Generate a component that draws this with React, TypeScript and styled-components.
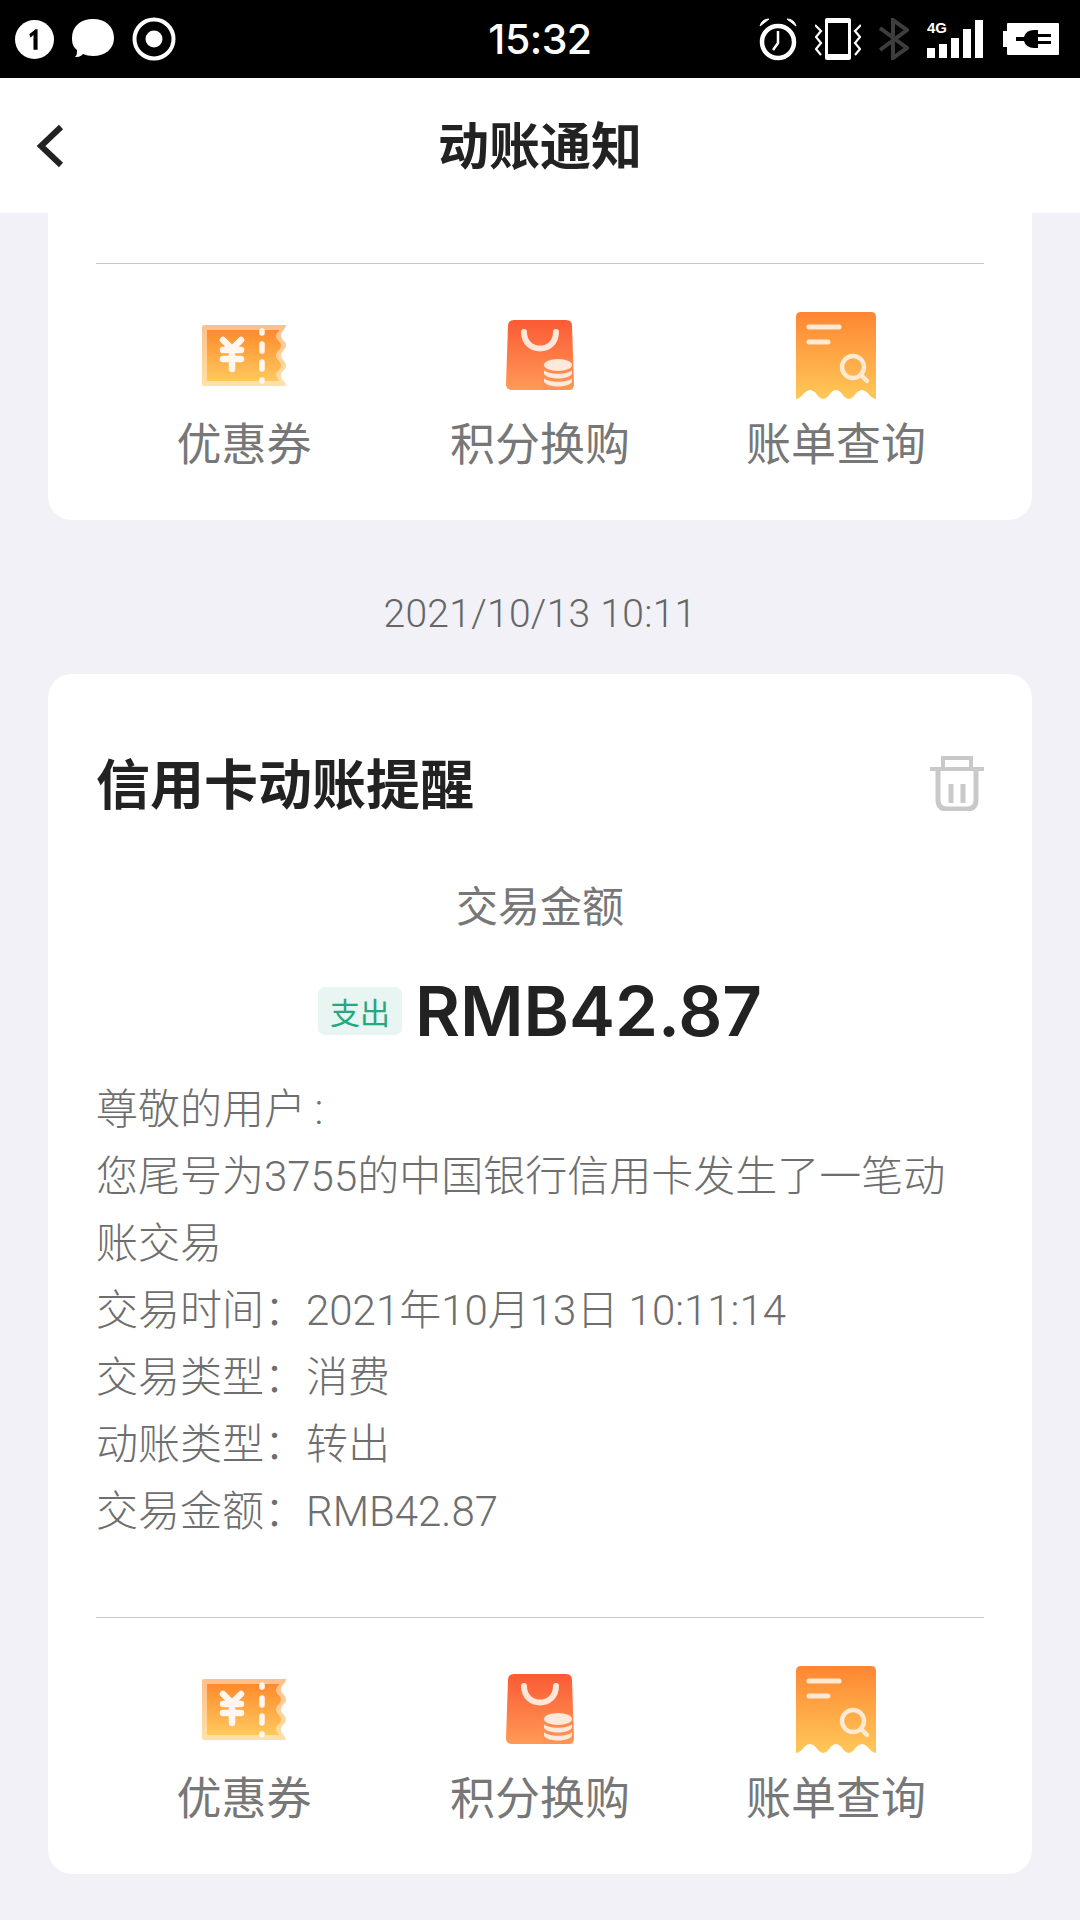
import React from 'react';
import styled, {createGlobalStyle} from 'styled-components';

const FONT = '"Liberation Sans", "Noto Sans CJK SC", sans-serif';
const THIN = 'Roboto, "Noto Sans CJK SC", sans-serif';

const GlobalStyle = createGlobalStyle`
  html, body {
    margin: 0;
    padding: 0;
    background: #f1f1f7;
  }
  * {
    box-sizing: border-box;
  }
`;

const Page = styled.div`
  width: 1080px;
  height: 1920px;
  overflow: hidden;
  display: flex;
  flex-direction: column;
  background: #f1f1f7;
  font-family: ${FONT};
`;

const StatusBar = styled.div`
  height: 78px;
  background: #000;
  display: grid;
  grid-template-columns: 1fr auto 1fr;
  align-items: center;
  padding: 0 20px 0 15px;
  color: #fff;
`;

const StatusLeft = styled.div`
  display: flex;
  align-items: center;
  gap: 17px;
`;

const StatusRight = styled.div`
  display: flex;
  align-items: center;
  justify-content: flex-end;
  gap: 18px;
`;

const Clock = styled.div`
  padding-left: 5px;
  font-family: Inter, sans-serif;
  font-size: 41px;
  font-weight: 500;
  letter-spacing: -0.5px;
  line-height: 78px;
`;

const NavBar = styled.div`
  position: relative;
  height: 135px;
  background: #fff;
  display: flex;
  align-items: center;
  justify-content: center;
`;

const BackIcon = styled.svg`
  position: absolute;
  left: 35px;
  top: 46px;
`;

const NavTitle = styled.div`
  padding-bottom: 5px;
  font-size: 51px;
  font-weight: 700;
  color: #222;
`;

const Card = styled.div<{$clipped?: boolean}>`
  margin: 0 48px;
  padding: ${p => (p.$clipped ? '50px' : '79px')} 48px 44px 48px;
  background: #fff;
  border-radius: ${p => (p.$clipped ? '0 0 24px 24px' : '24px')};
`;

const DateLine = styled.div`
  padding: 64px 0 30px;
  line-height: 60px;
  text-align: center;
  font-family: ${THIN};
  font-weight: 300;
  font-size: 39px;
  letter-spacing: 0.3px;
  color: #666;
`;

const Divider = styled.div`
  height: 1px;
  background: #c9c9c9;
`;

const ActionRow = styled.div`
  display: grid;
  grid-template-columns: repeat(3, 1fr);
  padding-top: 46px;
`;

const Action = styled.div`
  display: flex;
  flex-direction: column;
  align-items: center;
`;

const ActionIcon = styled.div`
  height: 90px;
  display: flex;
  align-items: center;
  justify-content: center;
`;

const ActionLabel = styled.div`
  margin-top: 16px;
  line-height: 60px;
  font-size: 45px;
  color: #777;
`;

const TitleRow = styled.div`
  display: flex;
  align-items: center;
  justify-content: space-between;
  height: 60px;
`;

const CardTitle = styled.div`
  padding-top: 5px;
  font-size: 54px;
  font-weight: 700;
  color: #222;
  line-height: 60px;
`;

const AmountLabel = styled.div`
  margin-top: 65px;
  text-align: center;
  line-height: 60px;
  font-size: 42px;
  color: #777;
`;

const AmountRow = styled.div`
  margin-top: 33px;
  height: 80px;
  display: flex;
  align-items: center;
  justify-content: center;
  gap: 13px;
`;

const Badge = styled.div`
  width: 84px;
  height: 48px;
  border-radius: 7px;
  background: #e8f5f2;
  color: #27a67f;
  font-size: 30px;
  display: flex;
  align-items: center;
  justify-content: center;
`;

const Amount = styled.div`
  font-family: Inter, sans-serif;
  font-size: 69px;
  font-weight: 600;
  color: #222;
  line-height: 80px;
`;

const Body = styled.div`
  margin-top: 25px;
  margin-bottom: 72px;
  font-family: ${THIN};
  font-weight: 300;
  font-size: 42px;
  line-height: 67px;
  color: #6e6e6e;
`;

const Gradient = ({id, from, to}: {id: string; from: string; to: string}) => (
  <linearGradient id={id} x1="0" y1="0" x2="0" y2="1">
    <stop offset="0" stopColor={from} />
    <stop offset="1" stopColor={to} />
  </linearGradient>
);

const TicketIcon = () => (
  <svg width="84" height="61" viewBox="0 0 84 61">
    <defs>
      <Gradient id="ticket" from="#ff8a2c" to="#ffc95e" />
    </defs>
    <path
      d="M2 0H84C84 4 79 6 79 10.500C79 15 84 16 84 20.500C84 25 79 26 79 30.500C79 35 84 36 84 40.500C84 45 79 46 79 50.500C79 55 84 57 84 61H2Q0 61 0 59V2Q0 0 2 0Z"
      fill="url(#ticket)"
      opacity="0.55"
    />
    <path
      d="M5 5H77C77 7 74 8 74 11C74 16 79 16 79 20.500C79 25 74 26 74 30.500C74 35 79 36 79 40.500C79 45 74 46 74 50C74 53 77 54 77 56H5Z"
      fill="url(#ticket)"
    />
    <g stroke="#fff7ef" strokeLinecap="round" fill="none">
      <path d="M21 15L30 24L39 15M30 24V44M21 25H39M21 34H39" strokeWidth="6.500" />
      <path d="M60 6V8M60 19V26M60 37V44M60 55V56" strokeWidth="5.500" />
    </g>
  </svg>
);

const BagIcon = () => (
  <svg width="68" height="70" viewBox="0 0 68 70">
    <defs>
      <Gradient id="bag" from="#fb5a34" to="#ff9a56" />
    </defs>
    <path d="M8 0H60Q66 0 66 6L68 64Q68 70 62 70H6Q0 70 0 64L2 6Q2 0 8 0Z" fill="url(#bag)" />
    <path d="M18 12C18 34 50 34 50 12" fill="none" stroke="#ffe6d8" strokeWidth="6" strokeLinecap="round" />
    <path d="M36 39H67V70H36Z" fill="#ff8a52" opacity="0.35" />
    <ellipse cx="52" cy="45" rx="14" ry="6" fill="#ffe9da" />
    <path d="M38 50C42 55 62 55 66 50V54C62 60 42 60 38 54Z" fill="#ffe9da" />
    <path d="M38 58C42 63 62 63 66 58V62C62 68 42 68 38 62Z" fill="#ffe9da" />
  </svg>
);

const ReceiptIcon = () => (
  <svg width="80" height="87" viewBox="0 0 80 87">
    <defs>
      <Gradient id="receipt" from="#ff8632" to="#ffc858" />
    </defs>
    <path
      d="M5 0H75Q80 0 80 5V87C74 87 72 78 66 78C60 78 58 87 53 87C47 87 46 78 40 78C34 78 33 87 27 87C22 87 20 78 14 78C8 78 6 87 0 87V5Q0 0 5 0Z"
      fill="url(#receipt)"
    />
    <g stroke="#ffe9d2" fill="none" strokeLinecap="round">
      <path d="M13 15H43" strokeWidth="5" />
      <path d="M13 30H32" strokeWidth="5" />
      <circle cx="57" cy="55" r="11" strokeWidth="4.500" />
      <path d="M65 63L71 69" strokeWidth="4.500" />
    </g>
  </svg>
);

const TrashIcon = () => (
  <svg width="54" height="55" viewBox="0 0 54 55" fill="none" stroke="#c9c9c9" strokeWidth="4">
    <path d="M0 13H54M13 13V2H41V13" />
    <path d="M8 13V44Q8 53 17 53H37Q46 53 46 44V13" strokeWidth="5" />
    <path d="M21 28V47M33 28V47" strokeWidth="5" />
  </svg>
);

const NoticeBadge = () => (
  <svg width="39" height="39" viewBox="0 0 38 38">
    <circle cx="19" cy="19" r="19" fill="#fff" />
    <path d="M14 14L20 9H22V29H18V14.500L15 17Z" fill="#000" />
  </svg>
);

const BubbleIcon = () => (
  <svg width="44" height="42" viewBox="0 0 44 42">
    <path
      d="M22 1C34 1 43 8 43 20C43 31 34 38 22 38C18 38 15 37 12 36C9 39 7 39 4 39C6 37 6 35 6 32C2 29 1 25 1 20C1 8 10 1 22 1Z"
      fill="#fff"
    />
  </svg>
);

const TargetIcon = () => (
  <svg width="44" height="44" viewBox="0 0 44 44">
    <circle cx="22" cy="22" r="19.500" fill="none" stroke="#fff" strokeWidth="4" />
    <circle cx="22" cy="22" r="8.500" fill="#fff" />
  </svg>
);

const AlarmIcon = () => (
  <svg width="38" height="44" viewBox="0 0 38 44" fill="none" stroke="#fff">
    <circle cx="19" cy="25" r="16" strokeWidth="4.500" />
    <path d="M19 14V26L14 33" strokeWidth="2.500" />
    <path d="M1 9Q3 2 10 2Z" fill="#fff" strokeWidth="1" />
    <path d="M37 9Q35 2 28 2Z" fill="#fff" strokeWidth="1" />
  </svg>
);

const VibrateIcon = () => (
  <svg width="46" height="44" viewBox="0 0 46 44">
    <rect x="10" y="1" width="26" height="42" rx="2" fill="#fff" />
    <rect x="13" y="6" width="20" height="31" fill="#000" />
    <path d="M0 8L6 14L1 20L6 26L1 32L6 38M46 8L40 14L45 20L40 26L45 32L40 38" fill="none" stroke="#fff" strokeWidth="2.200" />
  </svg>
);

const BluetoothIcon = () => (
  <svg width="30" height="42" viewBox="0 0 30 42">
    <path d="M1 10L28 30L14 40V2L28 12L1 32" fill="none" stroke="#3d3d3d" strokeWidth="4" />
  </svg>
);

const SignalText = styled.text`
  font-family: ${FONT};
  font-size: 15px;
  font-weight: 700;
  fill: #fff;
`;

const SIGNAL_TOPS = [28, 24, 18, 9, 0];

const SignalIcon = () => (
  <svg width="57" height="38" viewBox="0 0 57 38">
    <SignalText x="0" y="13">4G</SignalText>
    {SIGNAL_TOPS.map((top, i) => (
      <rect key={i} x={i * 12} y={top} width="8" height={38 - top} fill="#fff" />
    ))}
  </svg>
);

const BatteryIcon = () => (
  <svg width="58" height="34" viewBox="0 0 58 34">
    <path d="M6 1H56Q57 1 57 2V32Q57 33 56 33H6Q5 33 5 32V25H1V9H5V2Q5 1 6 1Z" fill="#fff" />
    <path d="M14 15H22Q24 8 32 8H36V12H49V15H36V19H49V22H36V26H32Q24 26 22 19H14Z" fill="#000" />
  </svg>
);

const Actions = () => (
  <>
    <Divider />
    <ActionRow>
      <Action>
        <ActionIcon><TicketIcon /></ActionIcon>
        <ActionLabel>优惠券</ActionLabel>
      </Action>
      <Action>
        <ActionIcon><BagIcon /></ActionIcon>
        <ActionLabel>积分换购</ActionLabel>
      </Action>
      <Action>
        <ActionIcon><ReceiptIcon /></ActionIcon>
        <ActionLabel>账单查询</ActionLabel>
      </Action>
    </ActionRow>
  </>
);

const BODY_LINES = [
  '尊敬的用户\u2009:',
  '您尾号为3755的中国银行信用卡发生了一笔动账交易',
  '交易时间：2021年10月13日 10:11:14',
  '交易类型：消费',
  '动账类型：转出',
  '交易金额：RMB42.87'
];

export default function App() {
  return (
    <Page>
      <GlobalStyle />
      <StatusBar>
        <StatusLeft>
          <NoticeBadge />
          <BubbleIcon />
          <TargetIcon />
        </StatusLeft>
        <Clock>15:32</Clock>
        <StatusRight>
          <AlarmIcon />
          <VibrateIcon />
          <BluetoothIcon />
          <SignalIcon />
          <BatteryIcon />
        </StatusRight>
      </StatusBar>
      <NavBar>
        <BackIcon width="30" height="44" viewBox="0 0 30 44">
          <path d="M26 3L6 22L26 41" fill="none" stroke="#222" strokeWidth="6" />
        </BackIcon>
        <NavTitle>动账通知</NavTitle>
      </NavBar>
      <Card $clipped>
        <Actions />
      </Card>
      <DateLine>2021/10/13 10:11</DateLine>
      <Card>
        <TitleRow>
          <CardTitle>信用卡动账提醒</CardTitle>
          <TrashIcon />
        </TitleRow>
        <AmountLabel>交易金额</AmountLabel>
        <AmountRow>
          <Badge>支出</Badge>
          <Amount>RMB42.87</Amount>
        </AmountRow>
        <Body>
          {BODY_LINES.map(line => (
            <div key={line}>{line}</div>
          ))}
        </Body>
        <Actions />
      </Card>
    </Page>
  );
}
